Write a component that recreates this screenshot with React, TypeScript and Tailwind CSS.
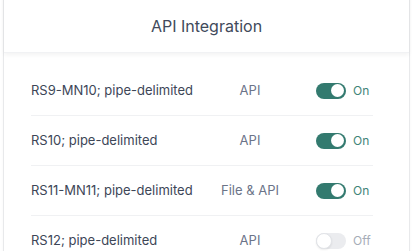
import React from "react";

const rows = [
  { name: "RS9-MN10; pipe-delimited", type: "API", on: true },
  { name: "RS10; pipe-delimited", type: "API", on: true },
  { name: "RS11-MN11; pipe-delimited", type: "File & API", on: true },
  { name: "RS12; pipe-delimited", type: "API", on: false },
];

function Toggle({ on }: { on: boolean }) {
  return (
    <div className="flex items-center gap-[7px]">
      <div
        className={
          on
            ? "w-[30px] h-[16px] rounded-full bg-[#337a6f] flex items-center justify-end pr-[2px]"
            : "w-[30px] h-[16px] rounded-full bg-[#ebecef] flex items-center justify-start"
        }
      >
        <div
          className={
            on
              ? "w-[13px] h-[13px] rounded-full bg-white"
              : "w-[16px] h-[16px] rounded-full bg-white border border-[#e2e4e8] shadow-[0_1px_2px_rgba(0,0,0,0.08)]"
          }
        />
      </div>
      <span className={on ? "text-[12px] text-[#3f8478]" : "text-[12px] text-[#a6adb8]"}>
        {on ? "On" : "Off"}
      </span>
    </div>
  );
}

export default function App() {
  return (
    <div className="w-[413px] h-[251px] bg-white overflow-hidden px-[3px]" style={{ fontFamily: "Inter, sans-serif" }}>
      <div className="-mt-2 h-[300px] border border-[#e8e9eb] rounded-md bg-white shadow-[0_1px_3px_rgba(0,0,0,0.04)]">
        <div className="h-[60px] pt-2 flex items-center justify-center shadow-[0_2px_4px_rgba(0,0,0,0.05)] border-b border-[#f1f2f4]">
          <span className="text-[16px] text-[#414a5b] -mt-[1px]">API Integration</span>
        </div>
        <div className="pt-[13px] ml-[27px] mr-[36px]">
          {rows.map((r, i) => (
            <div
              key={i}
              className={
                "h-[50px] grid grid-cols-[169px_100px_1fr] items-center " +
                (i < rows.length - 1 ? "border-b border-[#f0f1f3]" : "")
              }
            >
              <span className="text-[13px] text-[#3d4657]">{r.name}</span>
              <span className="text-[13px] text-[#6b7488] text-center">{r.type}</span>
              <div className="pl-[16px]">
                <Toggle on={r.on} />
              </div>
            </div>
          ))}
        </div>
      </div>
    </div>
  );
}
